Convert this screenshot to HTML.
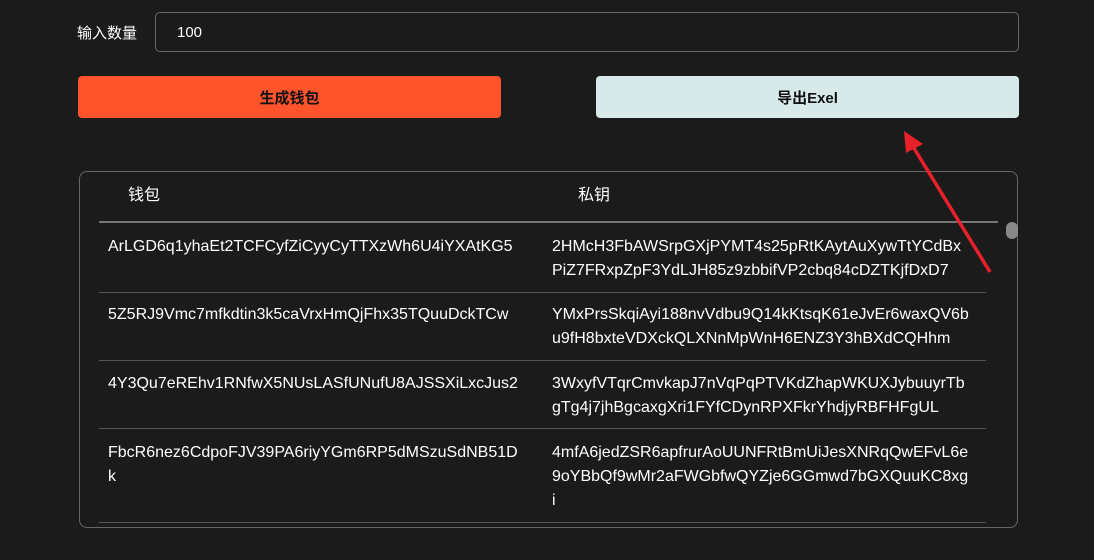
<!DOCTYPE html>
<html><head><meta charset="utf-8"><style>
body{margin:0;width:1094px;height:560px;background:#1b1b1b;font-family:"Liberation Sans","Noto Sans CJK SC",sans-serif;color:#fff;position:relative;overflow:hidden}
.a{position:absolute}
.lbl{left:77px;top:22px;font-size:15px}
.inp{left:155px;top:12px;width:864px;height:40px;border:1px solid #666;border-radius:5px;box-sizing:border-box}
.inp span{position:absolute;left:21px;top:11px;font-size:15px}
.btn{top:76px;height:42px;border-radius:4px;font-size:15px;font-weight:bold;color:#111;text-align:center;line-height:46px}
.tbl{left:79px;top:171px;width:939px;height:357px;border:1px solid #666;border-radius:8px;box-sizing:border-box}
.t{font-size:16px;line-height:24px;white-space:nowrap}
.line{background:#555;height:1px}
</style></head><body>
<div class="a lbl">输入数量</div>
<div class="a inp"><span>100</span></div>
<div class="a btn" style="left:78px;width:423px;background:#ff532c">生成钱包</div>
<div class="a btn" style="left:596px;width:423px;background:#d8e9ea">导出Exel</div>
<div class="a tbl"></div>
<div class="a t" style="left:128px;top:184px">钱包</div>
<div class="a t" style="left:578px;top:184px">私钥</div>
<div class="a" style="left:99px;top:221px;width:899px;height:2px;background:#777"></div>
<div class="a" style="left:1006px;top:222px;width:12px;height:17px;border-radius:6px;background:#888"></div>
<div class="a t" style="left:108px;top:235px">ArLGD6q1yhaEt2TCFCyfZiCyyCyTTXzWh6U4iYXAtKG5</div>
<div class="a t" style="left:552px;top:235px">2HMcH3FbAWSrpGXjPYMT4s25pRtKAytAuXywTtYCdBx<br>PiZ7FRxpZpF3YdLJH85z9zbbifVP2cbq84cDZTKjfDxD7</div>
<div class="a line" style="left:99px;top:292px;width:887px"></div>
<div class="a t" style="left:108px;top:303px">5Z5RJ9Vmc7mfkdtin3k5caVrxHmQjFhx35TQuuDckTCw</div>
<div class="a t" style="left:552px;top:303px">YMxPrsSkqiAyi188nvVdbu9Q14kKtsqK61eJvEr6waxQV6b<br>u9fH8bxteVDXckQLXNnMpWnH6ENZ3Y3hBXdCQHhm</div>
<div class="a line" style="left:99px;top:360px;width:887px"></div>
<div class="a t" style="left:108px;top:372px">4Y3Qu7eREhv1RNfwX5NUsLASfUNufU8AJSSXiLxcJus2</div>
<div class="a t" style="left:552px;top:372px">3WxyfVTqrCmvkapJ7nVqPqPTVKdZhapWKUXJybuuyrTb<br>gTg4j7jhBgcaxgXri1FYfCDynRPXFkrYhdjyRBFHFgUL</div>
<div class="a line" style="left:99px;top:428px;width:887px"></div>
<div class="a t" style="left:108px;top:441px">FbcR6nez6CdpoFJV39PA6riyYGm6RP5dMSzuSdNB51D<br>k</div>
<div class="a t" style="left:552px;top:441px">4mfA6jedZSR6apfrurAoUUNFRtBmUiJesXNRqQwEFvL6e<br>9oYBbQf9wMr2aFWGbfwQYZje6GGmwd7bGXQuuKC8xg<br>i</div>
<div class="a line" style="left:99px;top:522px;width:887px"></div>
<svg class="a" style="left:0;top:0" width="1094" height="560"><line x1="990" y1="272" x2="912" y2="145" stroke="#e8202a" stroke-width="3.5"/><polygon points="904,131 923,144 906,153" fill="#e8202a"/></svg>
</body></html>
